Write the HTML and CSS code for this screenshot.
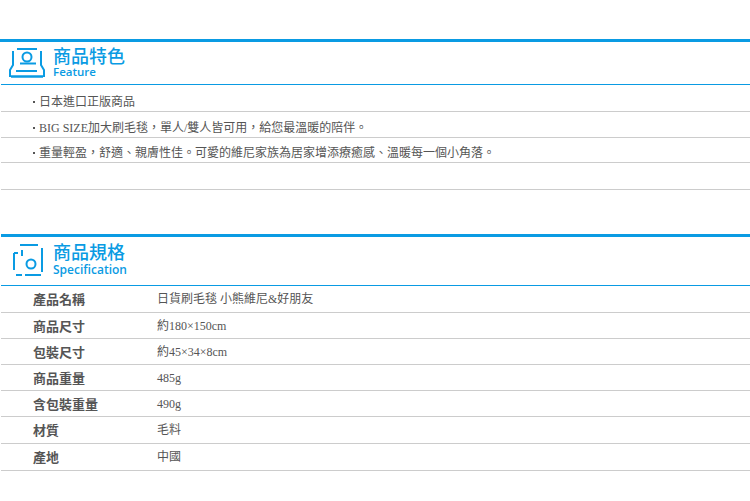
FILE: index.html
```html
<!DOCTYPE html>
<html lang="zh-Hant">
<head>
<meta charset="utf-8">
<title>商品特色</title>
<link rel="stylesheet" href="styles.css">
</head>
<body>
<section class="section feature">
  <header class="head">
    <svg class="icon" width="36" height="31" viewBox="0 0 36 31" fill="none" stroke="#0a9be3" stroke-width="2">
      <path d="M8 2H28"/>
      <path d="M4 4V18L1 23V30"/>
      <path d="M32 4V18L35 23V30"/>
      <circle cx="18" cy="10" r="4.500"/>
      <path d="M11 16.500H27"/>
      <path d="M7 24H28"/>
      <path d="M2 29.500H34" stroke-width="2.500"/>
    </svg>
    <div class="titles">
      <h2 class="title">商品特色</h2>
      <div class="sub">Feature</div>
    </div>
  </header>
  <ul class="list">
    <li class="item first">日本進口正版商品</li>
    <li class="item">BIG SIZE加大刷毛毯，單人/雙人皆可用，給您最溫暖的陪伴。</li>
    <li class="item short">重量輕盈，舒適、親膚性佳。可愛的維尼家族為居家增添療癒感、溫暖每一個小角落。</li>
    <li class="item empty"></li>
  </ul>
</section>
<section class="section spec">
  <header class="head">
    <svg class="icon" width="32" height="34" viewBox="0 0 32 34" fill="none" stroke="#0a9be3" stroke-width="2">
      <path d="M8 2H26"/>
      <path d="M30 5V29"/>
      <path d="M2 10V27"/>
      <path d="M2 10H6"/>
      <path d="M10 7V13"/>
      <circle cx="19" cy="21" r="4.500"/>
      <path d="M4 32H10M13 32H29"/>
    </svg>
    <div class="titles">
      <h2 class="title">商品規格</h2>
      <div class="sub">Specification</div>
    </div>
  </header>
  <dl class="table">
    <div class="row tall"><dt class="key">產品名稱</dt><dd class="val">日貨刷毛毯 小熊維尼&amp;好朋友</dd></div>
    <div class="row"><dt class="key">商品尺寸</dt><dd class="val">約180×150cm</dd></div>
    <div class="row"><dt class="key">包裝尺寸</dt><dd class="val">約45×34×8cm</dd></div>
    <div class="row"><dt class="key">商品重量</dt><dd class="val">485g</dd></div>
    <div class="row"><dt class="key">含包裝重量</dt><dd class="val">490g</dd></div>
    <div class="row tall"><dt class="key">材質</dt><dd class="val">毛料</dd></div>
    <div class="row tall"><dt class="key">產地</dt><dd class="val">中國</dd></div>
  </dl>
</section>
</body>
</html>
```
FILE: styles.css
```css
html, body {
  margin: 0;
  padding: 0;
  background: #fff;
}
body {
  padding-top: 39px;
  font-family: "Liberation Serif", "Noto Sans CJK TC", serif;
  font-size: 12px;
  color: #555;
  overflow: hidden;
}
.section {
  display: flow-root;
}
.feature {
  height: 195px;
  box-sizing: border-box;
  border-top: 3px solid #0a9be3;
}
.head {
  display: flex;
  align-items: flex-start;
  box-sizing: border-box;
  margin-left: 1px;
  border-bottom: 1px solid #0a9be3;
}
.feature .head {
  height: 43px;
  padding-top: 5px;
  padding-left: 8px;
  gap: 8px;
}
.spec .head {
  height: 52px;
  border-top: 3px solid #0a9be3;
  padding-top: 6px;
  padding-left: 11px;
  gap: 9px;
}
.titles {
  display: flex;
  flex-direction: column;
  color: #0a9be3;
  font-family: "Noto Sans CJK TC", sans-serif;
}
.title {
  margin: 0;
  font-size: 18px;
  line-height: 20px;
  font-weight: 500;
}
.sub {
  font-family: "Open Sans", "Noto Sans", sans-serif;
  font-size: 12px;
  line-height: 15px;
  font-weight: 600;
}
.feature .sub {
  font-size: 11.500px;
  margin-top: -1px;
}
.feature .titles {
  margin-top: -2px;
}
.spec .titles {
  margin-top: -2px;
}
.spec .sub {
  margin-top: 1px;
}
.list {
  margin: 0;
  padding: 0;
  list-style: none;
}
.item {
  box-sizing: border-box;
  height: 26px;
  margin-left: 1px;
  padding-top: 4px;
  padding-left: 38px;
  line-height: 24px;
  border-bottom: 1px solid #ccc;
  position: relative;
}
.item::before {
  content: "";
  position: absolute;
  left: 32px;
  top: 15px;
  width: 2px;
  height: 2px;
  background: #555;
}
.item.first {
  height: 27px;
  padding-top: 5px;
}
.item.first::before {
  top: 16px;
}
.item.short {
  height: 25px;
  padding-top: 3px;
}
.item.short::before {
  top: 14px;
}
.item.empty {
  height: 27px;
}
.item.empty::before {
  display: none;
}
.table {
  margin: 0;
}
.row {
  display: flex;
  box-sizing: border-box;
  height: 26px;
  margin-left: 1px;
  padding-top: 1px;
  border-bottom: 1px solid #ccc;
  line-height: 25px;
}
.row.tall {
  height: 27px;
}
.key {
  width: 124px;
  margin-top: -1px;
  padding-left: 32px;
  font-size: 13px;
  font-weight: 700;
  color: #555;
  font-family: "Noto Sans CJK TC", sans-serif;
}
.val {
  margin: 0;
}
```
